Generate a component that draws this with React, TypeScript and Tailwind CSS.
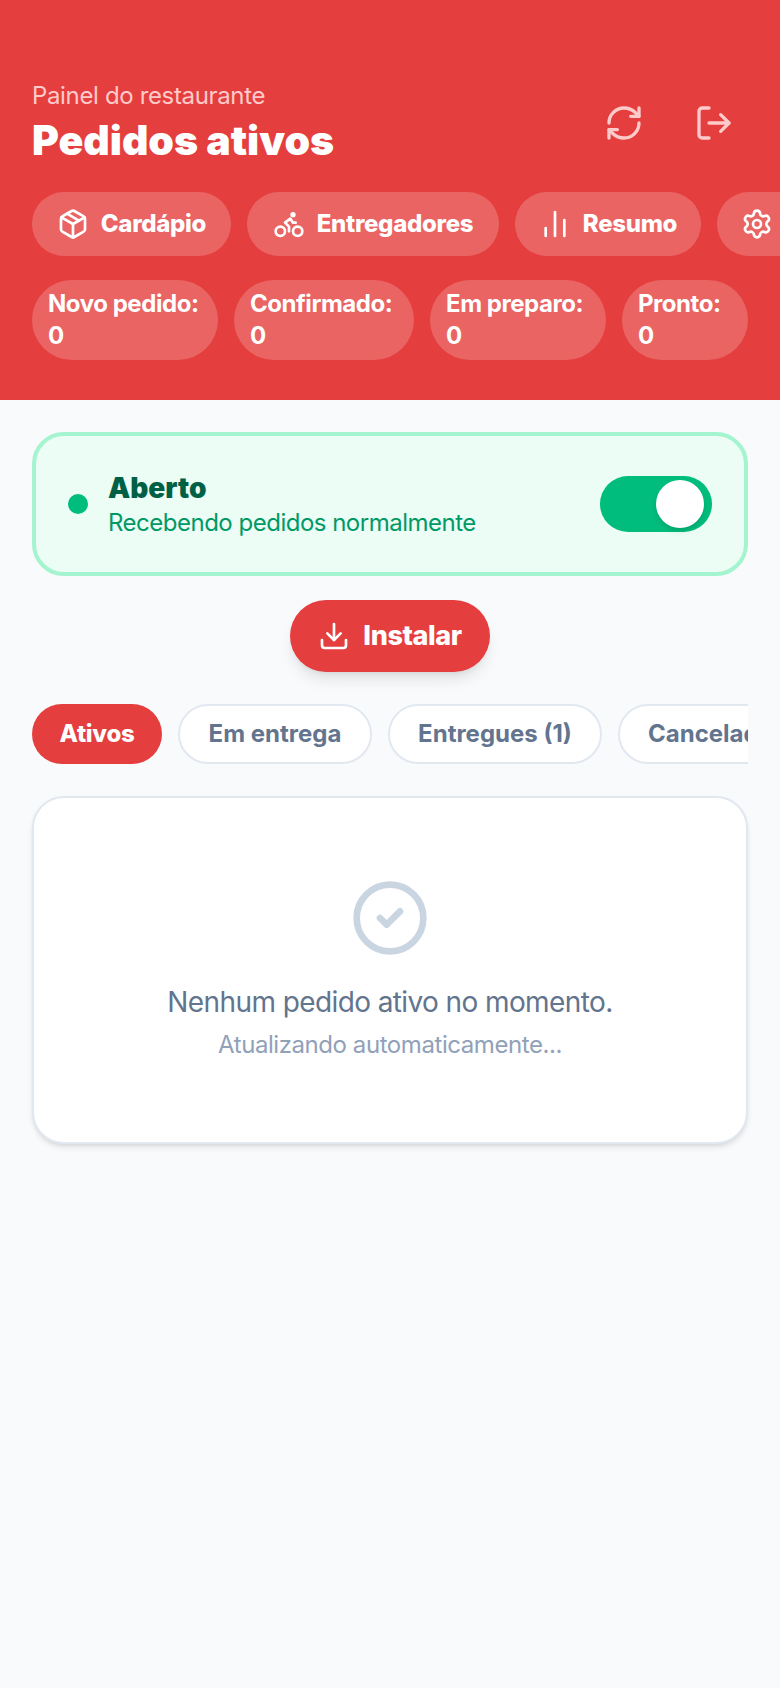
import { Package, Bike, ChartNoAxesColumn, Settings, RefreshCw, LogOut, Download, CircleCheck } from "lucide-react";

const nav = [
  { label: "Cardápio", Icon: Package, cls: "w-[199px]" },
  { label: "Entregadores", Icon: Bike, cls: "w-[252px]" },
  { label: "Resumo", Icon: ChartNoAxesColumn, cls: "w-[186px]" },
];
const stats = [
  { label: "Novo pedido:", cls: "w-[186px]" },
  { label: "Confirmado:", cls: "w-[180px]" },
  { label: "Em preparo:", cls: "w-[176px]" },
  { label: "Pronto:", cls: "w-[126px]" },
];

export default function App() {
  return (
    <div className="min-h-[1688px] bg-slate-50 font-['Inter',sans-serif]">
      <header className="h-[400px] overflow-hidden bg-[#e53e3e] pl-8 pt-20">
        <div className="flex items-center justify-between pr-[46px]">
          <div>
            <p className="text-[24px] leading-8 tracking-[-0.35px] text-[#fecaca]">Painel do restaurante</p>
            <h1 className="mt-[4px] text-[41px] leading-[48px] font-black tracking-[0px] text-white">Pedidos ativos</h1>
          </div>
          <div className="flex translate-y-[1px] gap-[50px] text-[#fecaca]">
            <RefreshCw size={40} />
            <LogOut size={40} />
          </div>
        </div>
        <div className="mt-[28px] flex gap-4">
          {nav.map(({ label, Icon, cls }) => (
            <div key={label} className={`${cls} flex h-16 shrink-0 items-center justify-center gap-3 rounded-full bg-white/20 text-[24px] font-extrabold tracking-[-0.3px] text-white`}>
              <Icon size={32} />
              <span>{label}</span>
            </div>
          ))}
          <div className="flex h-16 w-[100px] shrink-0 items-center rounded-full bg-white/20 pl-6 text-white">
            <Settings size={32} />
          </div>
        </div>
        <div className="mt-6 flex gap-4">
          {stats.map(({ label, cls }) => (
            <div key={label} className={`${cls} h-20 shrink-0 rounded-full bg-white/20 px-4 py-2 text-[24px] leading-8 font-bold tracking-[-0.45px] whitespace-nowrap text-white`}>
              <div>{label}</div>
              <div>0</div>
            </div>
          ))}
        </div>
      </header>
      <main className="px-8 pt-8">
        <section className="flex h-[144px] items-center rounded-[32px] border-4 border-emerald-200 bg-emerald-50 pr-8 pl-8">
          <span className="h-5 w-5 rounded-full bg-emerald-500" />
          <div className="ml-5 flex-1">
            <p className="text-[28px] leading-9 font-black tracking-[0px] text-emerald-800">Aberto</p>
            <p className="mt-[1px] text-[24px] leading-8 tracking-[-0.5px] text-emerald-600">Recebendo pedidos normalmente</p>
          </div>
          <div className="flex h-14 w-[112px] items-center justify-end rounded-full bg-emerald-500 pr-2">
            <span className="h-12 w-12 rounded-full bg-white shadow-md" />
          </div>
        </section>
        <div className="mt-6 flex justify-center">
          <button className="flex h-[72px] w-[200px] items-center justify-center gap-[13px] rounded-full bg-[#e53e3e] text-[27px] font-extrabold tracking-[-0.4px] text-white shadow-lg">
            <Download size={32} />
            Instalar
          </button>
        </div>
        <div className="mt-8 flex gap-4 overflow-hidden">
          <div className="flex h-[60px] w-[130px] shrink-0 items-center justify-center rounded-full bg-[#e53e3e] text-[24px] font-extrabold tracking-[-0.3px] text-white">Ativos</div>
          <div className="flex h-[60px] w-[194px] shrink-0 items-center justify-center rounded-full border-2 border-slate-200 bg-white text-[24px] font-bold text-slate-500">Em entrega</div>
          <div className="flex h-[60px] w-[214px] shrink-0 items-center justify-center rounded-full border-2 border-slate-200 bg-white text-[24px] font-bold text-slate-500">Entregues (1)</div>
          <div className="flex h-[60px] w-[200px] shrink-0 items-center rounded-full border-2 border-slate-200 bg-white pl-7 text-[24px] font-bold text-slate-500">Cancelados</div>
        </div>
        <section className="mt-8 flex h-[348px] flex-col items-center rounded-[32px] border-2 border-slate-200 bg-white pt-20 shadow-md">
          <CircleCheck size={80} strokeWidth={2} className="text-slate-300" />
          <p className="mt-6 text-[28px] leading-10 tracking-[-0.6px] text-slate-500">Nenhum pedido ativo no momento.</p>
          <p className="mt-[7px] text-[24px] leading-8 tracking-[-0.43px] text-slate-400">Atualizando automaticamente...</p>
        </section>
      </main>
    </div>
  );
}
